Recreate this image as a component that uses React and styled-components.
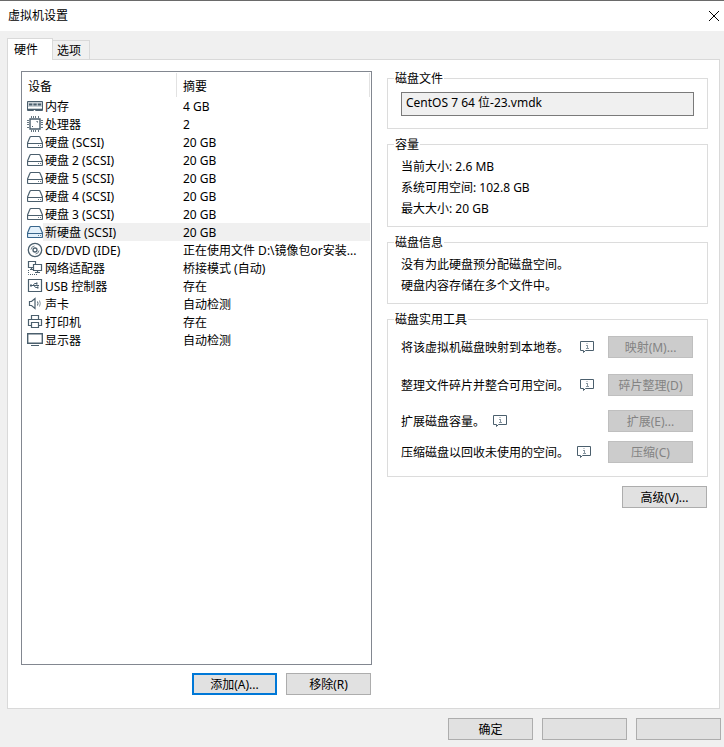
import { useState } from 'react';
import styled, { createGlobalStyle, css } from 'styled-components';

const GlobalStyle = createGlobalStyle`
  * {
    box-sizing: border-box;
  }

  body {
    margin: 0;
    background-color: #f0f0f0;
    color: #000;
    font-family: 'Noto Sans', 'Noto Sans CJK SC', sans-serif;
    font-size: 12px;
    line-height: 16px;
  }

  button,
  input {
    font: inherit;
  }
`;

const StyledDialog = styled.div`
  display: flex;
  flex-direction: column;
  min-height: 100vh;
`;

const StyledTitleBar = styled.header`
  display: flex;
  justify-content: space-between;
  align-items: center;
  height: 31px;
  padding: 0 4px 0 8px;
  background-color: #fff;
  border-top: 1px solid #6a6a6a;

  h1 {
    margin: 0;
    font-size: 12px;
    font-weight: 400;
  }
`;

const StyledCloseButton = styled.button`
  display: flex;
  padding: 0;
  border: none;
  background-color: transparent;
`;

const StyledTabList = styled.div`
  display: flex;
  align-items: flex-end;
  height: 28px;
  padding-left: 7px;
`;

const StyledTab = styled.button`
  height: 19px;
  padding: 2px 8px 0 4px;
  border: 1px solid #d9d9d9;
  border-width: 1px 1px 0 0;
  background-color: #f0f0f0;
  line-height: 16px;

  ${(props) =>
    props.$active &&
    css`
      z-index: 1;
      height: 22px;
      margin-bottom: -1px;
      padding: 0 14px 0 6px;
      border-left-width: 1px;
      background-color: #fff;
    `}
`;

const StyledPanel = styled.main`
  flex: 1;
  display: grid;
  grid-template-columns: 351fr 321fr;
  gap: 15px;
  margin: 0 4px 0 7px;
  padding: 10px 11px 13px 13px;
  border: 1px solid #d9d9d9;
  background-color: #fff;
`;

const StyledDevices = styled.section`
  display: flex;
  flex-direction: column;
  gap: 8px;
  min-width: 0;
  padding-top: 1px;
`;

const StyledListBox = styled.div`
  flex: 1;
  padding: 1px 1px 0 0;
  border: 1px solid #828790;
`;

const StyledTable = styled.table`
  width: 100%;
  table-layout: fixed;
  border-collapse: separate;
  border-spacing: 0;

  th {
    height: 24px;
    padding: 4px 0 0 6px;
    border-right: 1px solid #e2e2e2;
    font-weight: 400;
    text-align: left;
  }

  th:first-child {
    width: 155px;
  }

  td {
    height: 18px;
    padding: 0;
    white-space: nowrap;
  }
`;

const StyledDeviceName = styled.div`
  display: flex;
  align-items: center;

  svg {
    flex: none;
    margin-left: 5px;
  }

  span {
    flex: 1;
    padding: 2px 0 0 2px;
    background-color: ${(props) => (props.$selected ? '#f0f0f0' : '#fff')};
  }
`;

const StyledSummary = styled.td`
  && {
    padding: 2px 0 0 6px;
    background-color: ${(props) => (props.$selected ? '#f0f0f0' : '#fff')};
  }
`;

const StyledActions = styled.div`
  display: flex;
  justify-content: flex-end;
  gap: 9px;
  padding-right: 1px;
`;

const StyledAdvanced = styled(StyledActions)`
  padding-top: 2px;
`;

const StyledFooter = styled(StyledActions)`
  padding: 9px 3px 7px;
`;

const StyledButton = styled.button`
  width: 85px;
  height: 22px;
  padding: 2px 0 0;
  border: ${(props) =>
    props.$primary ? '2px solid #0078d7' : '1px solid #adadad'};
  background-color: #e1e1e1;
  color: #000;
  line-height: 16px;

  &:disabled {
    border-color: #bfbfbf;
    background-color: #ccc;
    color: #838383;
  }
`;

const StyledSettings = styled.section`
  display: flex;
  flex-direction: column;
  gap: 7px;
  min-width: 0;
`;

const StyledGroup = styled.fieldset`
  min-width: 0;
  margin: 0;
  padding: 4px 13px 7px;
  border: 1px solid #dcdcdc;

  legend {
    margin-left: -7px;
    padding: 2px 1px 0;
    line-height: 14px;
  }

  p {
    margin: 0;
    line-height: 21px;
  }
`;

const StyledFileGroup = styled(StyledGroup)`
  padding: 6px 13px 12px;
`;

const StyledFileInput = styled.input`
  display: block;
  width: 100%;
  height: 24px;
  padding: 0 4px 4px;
  border: 1px solid #7a7a7a;
  background-color: #f0f0f0;
  color: #000;
  outline: none;
`;

const StyledToolGroup = styled(StyledGroup)`
  padding: 1px 14px 10px 13px;
`;

const StyledTools = styled.div`
  display: grid;
  grid-template-rows: 38px 38px 34px 28px;
`;

const StyledTool = styled.div`
  display: flex;
  align-items: center;
  gap: ${(props) => (props.$wide ? 11 : 8)}px;

  span {
    padding-top: 2px;
  }

  svg {
    flex: none;
  }

  button {
    margin-left: auto;
  }
`;

function Icon({ color = '#4b5f6d', children }) {
  return (
    <svg
      width="16"
      height="16"
      viewBox="0 0 16 16"
      fill="none"
      stroke={color}
      aria-hidden="true"
    >
      {children}
    </svg>
  );
}

function MemoryIcon() {
  return (
    <Icon>
      <path d="M.5 3.5h15v8H.5z" fill="#c9d1d6" />
      <path d="M2 6.5h3.3M6.4 6.5h3.3M10.8 6.5h3.3" strokeWidth="2" />
      <path d="M1 9.5h14" stroke="#fff" />
      <path d="M.5 11v1.5h6v-1h2v1h7V11" />
    </Icon>
  );
}

function CpuIcon() {
  return (
    <Icon>
      <path d="M3 3h10v10H3z" strokeWidth="1.4" />
      <path
        d="M4.5 0v2M6.5 0v2M8.5 0v2M11.5 0v2M4.5 14v2M6.5 14v2M8.5 14v2M11.5 14v2M0 4.5h2M0 6.5h2M0 8.5h2M0 11.5h2M14 4.5h2M14 6.5h2M14 8.5h2M14 11.5h2"
        stroke="#65757f"
      />
      <path d="M9.5 5.5h1v1M5 10.5h1" />
    </Icon>
  );
}

function DiskIcon({ selected }) {
  return (
    <Icon color={selected ? '#39668c' : '#4b5f6d'}>
      <path
        d="M4 2.5h8q.8 0 1.1.8L15.5 9v3.5q0 1-1 1h-13q-1 0-1-1V9l2.4-5.7q.3-.8 1.1-.8z"
        fill={selected ? '#e4f1fb' : '#fff'}
        strokeWidth="1.2"
      />
      <path d="M1 9.5h14" />
      <path d="M11 11.5h1m1 0h1" stroke="#74848f" />
    </Icon>
  );
}

function DiscIcon() {
  return (
    <Icon>
      <circle cx="8" cy="8" r="6.7" strokeWidth="1.3" />
      <circle cx="8" cy="8" r="2" strokeWidth="1.3" />
      <path d="M4 7.5A4 4 0 0 1 7.5 4M12 8.5A4 4 0 0 1 8.5 12" stroke="#74848f" />
    </Icon>
  );
}

function NetworkIcon() {
  return (
    <Icon>
      <path d="M8.5 4V1.5h-7v6h5M4.5 7.5v2M3 9.5h3" strokeWidth="1.2" />
      <path d="M6.5 4.5h8v6h-8zM10.5 10.5v2M8 12.5h5" fill="#fff" strokeWidth="1.2" />
      <path d="M1.5 10v4.5h9" strokeDasharray="1 1" />
    </Icon>
  );
}

function UsbIcon() {
  return (
    <Icon>
      <path d="M1.5 1.5h13v12h-13z" strokeWidth="1.2" />
      <path d="M4 7.5h8M6 7.5l1.5-2H9M7 7.5l1.5 2H10" />
      <path d="M3 7.5h2M9 5.5h1.5M10 9.5h1.5" strokeWidth="2" />
    </Icon>
  );
}

function SoundIcon() {
  return (
    <Icon>
      <path d="M2.5 5.5h2l3.5-3v10l-3.5-3h-2z" strokeWidth="1.2" />
      <path d="M10.5 5.5q1 2 0 4" />
      <path d="M12.5 4.5q1.5 3 0 6" stroke="#8997a1" />
    </Icon>
  );
}

function PrinterIcon() {
  return (
    <Icon>
      <path d="M4.5 5V1.5h7V5M4 11.5H1.5v-6h13v6H12" strokeWidth="1.2" />
      <path d="M4.5 8.5h7v5h-7z" strokeWidth="1.2" />
    </Icon>
  );
}

function DisplayIcon() {
  return (
    <Icon>
      <path d="M.7 1.7h14.6v9.6H.7z" strokeWidth="1.4" />
      <path d="M4 13.5h8" />
    </Icon>
  );
}

function InfoIcon() {
  return (
    <svg width="14" height="12" viewBox="0 0 14 12" fill="none" aria-hidden="true">
      <path d="M.5.5h13v9H5.5l-2 2v-2h-3z" stroke="#4b5f6d" />
      <path d="M7 2v1M6 4.5h1M6 7.5h3" stroke="#8997a1" />
      <path d="M7.5 4v4" stroke="#8997a1" />
    </svg>
  );
}

const devices = [
  { name: '内存', summary: '4 GB', icon: MemoryIcon },
  { name: '处理器', summary: '2', icon: CpuIcon },
  { name: '硬盘 (SCSI)', summary: '20 GB', icon: DiskIcon },
  { name: '硬盘 2 (SCSI)', summary: '20 GB', icon: DiskIcon },
  { name: '硬盘 5 (SCSI)', summary: '20 GB', icon: DiskIcon },
  { name: '硬盘 4 (SCSI)', summary: '20 GB', icon: DiskIcon },
  { name: '硬盘 3 (SCSI)', summary: '20 GB', icon: DiskIcon },
  { name: '新硬盘 (SCSI)', summary: '20 GB', icon: DiskIcon },
  {
    name: 'CD/DVD (IDE)',
    summary: '正在使用文件 D:\\镜像包or安装...',
    icon: DiscIcon,
  },
  { name: '网络适配器', summary: '桥接模式 (自动)', icon: NetworkIcon },
  { name: 'USB 控制器', summary: '存在', icon: UsbIcon },
  { name: '声卡', summary: '自动检测', icon: SoundIcon },
  { name: '打印机', summary: '存在', icon: PrinterIcon },
  { name: '显示器', summary: '自动检测', icon: DisplayIcon },
];

const tools = [
  { text: '将该虚拟机磁盘映射到本地卷。', action: '映射(M)...', wide: true },
  { text: '整理文件碎片并整合可用空间。', action: '碎片整理(D)', wide: true },
  { text: '扩展磁盘容量。', action: '扩展(E)...' },
  { text: '压缩磁盘以回收未使用的空间。', action: '压缩(C)' },
];

function DeviceList() {
  const [selected, setSelected] = useState('新硬盘 (SCSI)');

  return (
    <StyledListBox>
      <StyledTable>
        <thead>
          <tr>
            <th scope="col">设备</th>
            <th scope="col">摘要</th>
          </tr>
        </thead>
        <tbody>
          {devices.map(({ name, summary, icon: DeviceIcon }) => (
            <tr key={name} onClick={() => setSelected(name)}>
              <td>
                <StyledDeviceName $selected={name === selected}>
                  <DeviceIcon selected={name === selected} />
                  <span>{name}</span>
                </StyledDeviceName>
              </td>
              <StyledSummary $selected={name === selected}>
                {summary}
              </StyledSummary>
            </tr>
          ))}
        </tbody>
      </StyledTable>
    </StyledListBox>
  );
}

export default function App() {
  return (
    <StyledDialog>
      <GlobalStyle />
      <StyledTitleBar>
        <h1>虚拟机设置</h1>
        <StyledCloseButton type="button" aria-label="关闭">
          <svg width="12" height="12" viewBox="0 0 12 12" stroke="#000">
            <path d="M1 1l10 10M11 1L1 11" />
          </svg>
        </StyledCloseButton>
      </StyledTitleBar>
      <StyledTabList role="tablist">
        <StyledTab type="button" role="tab" aria-selected="true" $active>
          硬件
        </StyledTab>
        <StyledTab type="button" role="tab" aria-selected="false">
          选项
        </StyledTab>
      </StyledTabList>
      <StyledPanel>
        <StyledDevices>
          <DeviceList />
          <StyledActions>
            <StyledButton type="button" $primary>
              添加(A)...
            </StyledButton>
            <StyledButton type="button">移除(R)</StyledButton>
          </StyledActions>
        </StyledDevices>
        <StyledSettings>
          <StyledFileGroup>
            <legend id="disk-file">磁盘文件</legend>
            <StyledFileInput
              type="text"
              aria-labelledby="disk-file"
              value="CentOS 7 64 位-23.vmdk"
              readOnly
            />
          </StyledFileGroup>
          <StyledGroup>
            <legend>容量</legend>
            <p>当前大小: 2.6 MB</p>
            <p>系统可用空间: 102.8 GB</p>
            <p>最大大小: 20 GB</p>
          </StyledGroup>
          <StyledGroup>
            <legend>磁盘信息</legend>
            <p>没有为此硬盘预分配磁盘空间。</p>
            <p>硬盘内容存储在多个文件中。</p>
          </StyledGroup>
          <StyledToolGroup>
            <legend>磁盘实用工具</legend>
            <StyledTools>
              {tools.map(({ text, action, wide }) => (
                <StyledTool key={action} $wide={wide}>
                  <span>{text}</span>
                  <InfoIcon />
                  <StyledButton type="button" disabled>
                    {action}
                  </StyledButton>
                </StyledTool>
              ))}
            </StyledTools>
          </StyledToolGroup>
          <StyledAdvanced>
            <StyledButton type="button">高级(V)...</StyledButton>
          </StyledAdvanced>
        </StyledSettings>
      </StyledPanel>
      <StyledFooter>
        <StyledButton type="button">确定</StyledButton>
        <StyledButton type="button" aria-label="取消" />
        <StyledButton type="button" aria-label="帮助" />
      </StyledFooter>
    </StyledDialog>
  );
}
